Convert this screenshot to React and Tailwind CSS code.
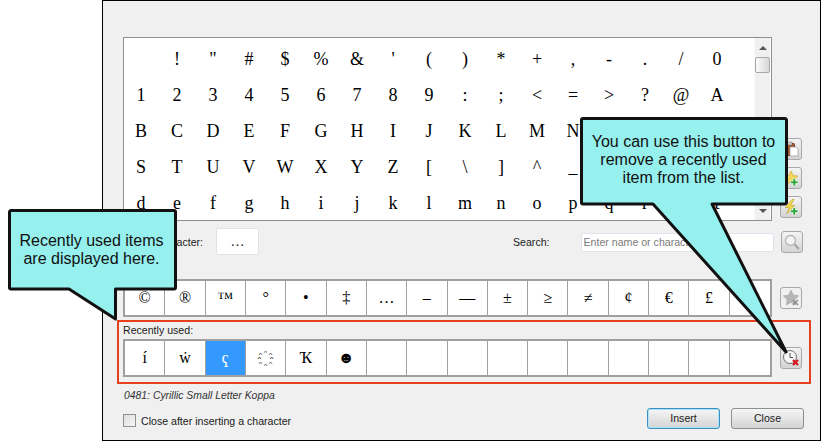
const ROWS = [
  ['', '!', '"', '#', '$', '%', '&', "'", '(', ')', '*', '+', ',', '-', '.', '/', '0'],
  ['1', '2', '3', '4', '5', '6', '7', '8', '9', ':', ';', '<', '=', '>', '?', '@', 'A'],
  ['B', 'C', 'D', 'E', 'F', 'G', 'H', 'I', 'J', 'K', 'L', 'M', 'N', 'O', 'P', 'Q', 'R'],
  ['S', 'T', 'U', 'V', 'W', 'X', 'Y', 'Z', '[', '\\', ']', '^', '_', '`', 'a', 'b', 'c'],
  ['d', 'e', 'f', 'g', 'h', 'i', 'j', 'k', 'l', 'm', 'n', 'o', 'p', 'q', 'r', 's', 't'],
];

const FAVORITES = ['©', '®', '™', '°', '•', '‡', '…', '–', '—', '±', '≥', '≠', '¢', '€', '£', ''];
const RECENT = ['í', 'ẇ', 'ҁ', '҈', 'Ҡ', '☻', '', '', '', '', '', '', '', '', '', ''];

const SERIF = { fontFamily: '"Liberation Serif", "DejaVu Serif", serif' };

function IconButton({ children, flat }) {
  return (
    <button
      type="button"
      className={`w-[22px] h-[22px] flex items-center justify-center rounded-[3px] border border-[#a8a8a8] ${
        flat ? 'bg-[#f0f0f0]' : 'bg-gradient-to-b from-[#f4f4f4] to-[#d4d4d4]'
      }`}
    >
      {children}
    </button>
  );
}

function PlusBadge() {
  return <path d="M10 8.500h2.500V11H15v2.500h-2.500V16H10v-2.500H7.500V11H10z" fill="#2fa83a" stroke="#fff" strokeWidth="0.6" />;
}

function CharStrip({ items, selected }) {
  return (
    <div className="w-[649px] h-[38px] grid grid-cols-16 border-2 border-[#a0a0a0] bg-white" style={SERIF}>
      {items.map((ch, i) => (
        <div
          key={i}
          className={`flex items-center justify-center text-[16px] border-[#a0a0a0] ${i < 15 ? 'border-r' : ''} ${
            i === selected ? 'bg-[#3399ff] text-white' : 'text-black'
          }`}
        >
          {ch}
        </div>
      ))}
    </div>
  );
}

export default function App() {
  return (
    <div
      className="w-[822px] h-[441px] bg-white overflow-hidden relative pl-[102px] text-[10.6px] text-[#1a1a1a]"
      style={{ fontFamily: '"Liberation Sans", sans-serif' }}
    >
      <div className="w-[719px] h-[441px] border border-black bg-[#f0f0f0] flex flex-col pt-[36px]">
        <div className="flex pl-[20px] items-end">
          <div className="w-[649px] h-[184px] border border-[#8e8f8f] bg-white flex overflow-hidden">
            <div className="w-[631px] pt-[3px] -ml-[1px]" style={SERIF}>
              {ROWS.map((row, r) => (
                <div key={r} className="flex h-[36px]">
                  {row.map((ch, c) => (
                    <div key={c} className="w-[36px] flex items-center justify-center text-[18px] text-black">
                      {ch}
                    </div>
                  ))}
                </div>
              ))}
            </div>
            <div className="w-[16px] ml-auto mr-[1px] bg-[#f0f0f0] flex flex-col items-center border-l border-[#f8f8f8]">
              <div className="mt-[8px] w-0 h-0 border-x-[4px] border-x-transparent border-b-[4px] border-b-[#555]" />
              <div className="mt-[7px] w-[15px] h-[16px] rounded-[2px] border border-[#a8a8a8] bg-gradient-to-r from-[#fbfbfb] to-[#d8d8d8]" />
              <div className="mt-auto mb-[7px] w-0 h-0 border-x-[4px] border-x-transparent border-t-[4px] border-t-[#555]" />
            </div>
          </div>
          <div className="ml-[8px] flex flex-col gap-[7px] mb-[3px]">
            <IconButton>
              <svg width="16" height="16" viewBox="0 0 16 16">
                <rect x="1.500" y="2.500" width="10" height="12" rx="1" fill="#a5562a" stroke="#6e3a1c" />
                <rect x="4" y="1" width="5" height="3" fill="#ccc" stroke="#777" strokeWidth="0.5" />
                <path d="M7 6h6l2 2v7H7z" fill="#fff" stroke="#999" strokeWidth="0.7" />
              </svg>
            </IconButton>
            <IconButton>
              <svg width="16" height="16" viewBox="0 0 16 16">
                <path d="M8 1l2.100 4.400 4.900.7-3.500 3.400.8 4.800L8 11.600l-4.300 2.700.8-4.800L1 6.100l4.900-.7z" fill="#f3d55c" stroke="#c9a227" strokeWidth="0.6" />
                <PlusBadge />
              </svg>
            </IconButton>
            <IconButton>
              <svg width="16" height="16" viewBox="0 0 16 16">
                <path d="M9 .5L2.500 8.500h4L3.500 15l8-8.500h-4L11 .5z" fill="#f5dc4a" stroke="#b8a020" strokeWidth="0.6" />
                <PlusBadge />
              </svg>
            </IconButton>
          </div>
        </div>

        <div className="flex items-start pl-[20px] mt-[7px] h-[27px]">
          <span className="w-[80px] flex justify-end whitespace-nowrap mt-[7px]">Selected character:</span>
          <div className="ml-[13px] w-[43px] h-[27px] bg-white border border-[#e2e3ea] rounded-[2px] flex items-center justify-center text-[14px] pb-[1px]" style={SERIF}>
            …
          </div>
          <span className="ml-[254px] mt-[7px]">Search:</span>
          <div className="ml-[31px] mt-[5px] w-[193px] h-[19px] bg-white border border-[#dfe3ee] rounded-[2px] px-[2px] text-[#7a7a7a] flex items-center">
            Enter name or character
          </div>
          <div className="ml-[7px] mt-[3px]">
            <IconButton>
              <svg width="18" height="18" viewBox="0 0 18 18" fill="none">
                <circle cx="7.500" cy="7.500" r="5" fill="#f4f4f4" stroke="#b5b5b5" strokeWidth="1.300" />
                <path d="M11.500 11.500l4.500 4.500" stroke="#a5a5a5" strokeWidth="2.200" />
              </svg>
            </IconButton>
          </div>
        </div>

        <div className="flex items-center pl-[20px] mt-[24px]">
          <CharStrip items={FAVORITES} />
          <div className="ml-[8px]">
            <IconButton flat>
              <svg width="18" height="18" viewBox="0 0 18 18">
                <path d="M9 1l2.400 5 5.400.8-3.900 3.800.9 5.400L9 13.400 4.200 16l.9-5.400L1.200 6.800l5.400-.8z" fill="#b5b5b5" stroke="#a0a0a0" strokeWidth="0.5" />
                <path d="M11 11l5 5M16 11l-5 5" stroke="#8d8d8d" strokeWidth="1.500" />
              </svg>
            </IconButton>
          </div>
        </div>

        <div className="ml-[14px] mt-[3px] w-[694px] h-[64px] border-2 border-[#e8401c] pl-[4px] pt-[1px]">
          <div className="h-[14px] leading-[14px]">Recently used:</div>
          <div className="flex items-center mt-[2px]">
            <CharStrip items={RECENT} selected={2} />
            <div className="ml-[8px]">
              <IconButton>
                <svg width="18" height="18" viewBox="0 0 18 18" fill="none">
                  <circle cx="8" cy="8" r="6.500" fill="#f6f6f6" stroke="#707070" />
                  <path d="M8 4v4.500h3" stroke="#555" />
                  <path d="M11 11l5 5M16 11l-5 5" stroke="#d8141c" strokeWidth="2.200" />
                </svg>
              </IconButton>
            </div>
          </div>
        </div>

        <div className="pl-[21px] mt-[5px] h-[14px] leading-[14px] italic text-[10.4px] text-[#333]">
          0481: Cyrillic Small Letter Koppa
        </div>

        <div className="flex items-start pl-[20px] mt-[5px]">
          <div className="mt-[6px] w-[13px] h-[13px] border border-[#8e8f8f] bg-gradient-to-br from-[#dcdcdc] to-[#f8f8f8]" />
          <span className="ml-[5px] mt-[6px]">Close after inserting a character</span>
          <button
            type="button"
            className="ml-auto w-[73px] h-[21px] rounded-[3px] border border-[#3c8fc0] bg-gradient-to-b from-[#f6f6f6] to-[#d4d4d4] text-[#1a1a1a] shadow-[inset_0_0_0_1px_#a8e4f8]"
          >
            Insert
          </button>
          <button
            type="button"
            className="ml-[11px] mr-[16px] w-[73px] h-[21px] rounded-[3px] border border-[#8e8f8f] bg-gradient-to-b from-[#f6f6f6] to-[#d4d4d4] text-[#1a1a1a]"
          >
            Close
          </button>
        </div>
      </div>

      {/* left callout */}
      <div className="absolute left-[8px] top-[208px] w-[170px] h-[114px]">
        <svg width="170" height="114" className="absolute inset-0">
          <path
            d="M3 2.500H166a1.500 1.500 0 0 1 1.500 1.500V79.500a1.500 1.500 0 0 1-1.500 1.500H107.500V111L61 81H3a1.500 1.500 0 0 1-1.500-1.500V4A1.500 1.500 0 0 1 3 2.500z"
            fill="#96f0ee"
            stroke="#111"
            strokeWidth="3"
            strokeLinejoin="round"
          />
        </svg>
        <div className="relative pt-[24px] pr-[3px] text-center text-[16px] leading-[18px] text-[#111]">
          Recently used items
          <br />
          are displayed here.
        </div>
      </div>

      {/* right callout */}
      <div className="absolute left-[579px] top-[115px] w-[212px] h-[240px]">
        <svg width="212" height="240" className="absolute inset-0">
          <path
            d="M4 3.500H206a1.500 1.500 0 0 1 1.500 1.500V87.500a1.500 1.500 0 0 1-1.500 1.500H133L207 237L74 89H4a1.500 1.500 0 0 1-1.500-1.500V5A1.500 1.500 0 0 1 4 3.500z"
            fill="#96f0ee"
            stroke="#111"
            strokeWidth="3"
            strokeLinejoin="round"
          />
        </svg>
        <div className="relative pt-[18px] pr-[3px] text-center text-[16px] leading-[18px] text-[#111]">
          You can use this button to
          <br />
          remove a recently used
          <br />
          item from the list.
        </div>
      </div>
    </div>
  );
}
